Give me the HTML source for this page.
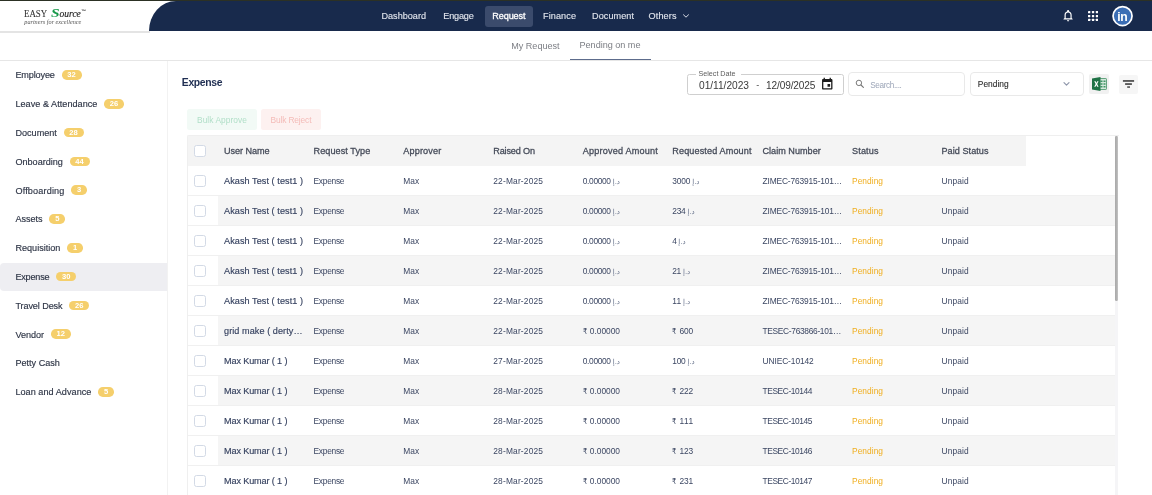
<!DOCTYPE html>
<html lang="en"><head><meta charset="utf-8"><title>Expense - Pending on me</title>
<style>
*{box-sizing:border-box;margin:0;padding:0}
html,body{width:1152px;height:495px;overflow:hidden;background:#fff}
body{position:relative;font-family:"Liberation Sans","DejaVu Sans",sans-serif;color:#2e3a55;-webkit-font-smoothing:antialiased}
#app{position:absolute;left:0;top:0;width:1152px;height:495px;will-change:transform}
.a{position:absolute}
.t{position:absolute;white-space:nowrap;line-height:1}
.dj{font-family:"DejaVu Sans","Liberation Sans",sans-serif}
.nav{color:#e1e5ed;-webkit-text-stroke:.12px #e1e5ed}
.navb{color:#fff;-webkit-text-stroke:.3px #fff}
.tab{color:#7c7e84}
.side{color:#2d3445;-webkit-text-stroke:.15px #2d3445}
.badge{position:absolute;height:9.600px;border-radius:4.800px;background:#f5cf6c;color:#fff;font-size:7.600px;line-height:9.600px;text-align:center;font-weight:bold}
.h1{color:#1f2e52;font-weight:bold}
.th{color:#454b59;-webkit-text-stroke:.28px #454b59}
.un{color:#364260;-webkit-text-stroke:.15px #364260}
.td{color:#3c4763}
.pend{color:#f0ae1e}
.aed{color:#65708a}
.inr{transform-origin:0 50%;transform:scaleX(.82)}
.cb{position:absolute;width:12px;height:12px;border:1px solid #d3dae6;border-radius:2.5px;background:#fff}
.row{position:absolute;left:188px;width:927px;height:30px;border-bottom:1px solid #f0f0f0;background:#fff}
.row.alt::after{content:"";position:absolute;left:30px;top:0;right:0;bottom:0;background:#f5f5f5}
</style></head><body><div id="app">
<div class="a" style="left:0;top:0;width:1152px;height:1px;background:#2c3124"></div>
<div class="a" style="left:0;top:31px;width:150px;height:1.5px;background:#e4e4e4"></div>
<div class="a" style="left:149px;top:1px;width:1003px;height:30px;background:#182a4c;border-top-left-radius:27px 30px"></div>
<div class="a" style="left:485px;top:6px;width:48px;height:21px;background:#3b4b6c;border-radius:3px"></div>
<div class="a" style="left:24.3px;top:3.400px;height:16px;line-height:16px;font-size:11.400px;white-space:nowrap;font-family:'Liberation Serif',serif;color:#333"><span style="display:inline-block;font-size:11.4px;transform-origin:0 50%;transform:scaleX(.78);margin-right:-6.250px;-webkit-text-stroke:.1px #333">EASY</span> <span style="display:inline-block;font-style:italic;font-size:9.8px;color:#222;-webkit-text-stroke:.15px #222;transform-origin:0 50%;transform:scaleX(.97)"><span style="display:inline-block;font-weight:bold;font-size:13.5px;color:#17994a;-webkit-text-stroke:0;transform-origin:0 50%;transform:scaleX(1.18);margin-right:1.300px">S</span>ource</span><span style="display:inline-block;font-family:'Liberation Sans',sans-serif;font-weight:bold;font-size:5px;color:#333;vertical-align:3.300px;margin-left:-.4px">&#x2122;</span></div>
<div class="a" style="left:24.3px;top:18px;font-family:'Liberation Serif',serif;font-style:italic;font-size:6.2px;line-height:7px;color:#555;white-space:nowrap">partners for excellence</div>
<span class="t nav" style="left:381.5px;top:11.60px;font-size:9.1px;">Dashboard</span>
<span class="t nav" style="left:443.3px;top:11.60px;font-size:9.1px;letter-spacing:-0.172px;">Engage</span>
<span class="t navb" style="left:492.3px;top:11.60px;font-size:9.1px;letter-spacing:-0.112px;">Request</span>
<span class="t nav" style="left:543px;top:11.60px;font-size:9.1px;letter-spacing:0.107px;">Finance</span>
<span class="t nav" style="left:592px;top:11.60px;font-size:9.1px;letter-spacing:0.078px;">Document</span>
<span class="t nav" style="left:648.5px;top:11.60px;font-size:9.1px;letter-spacing:0.141px;">Others</span>
<svg class="a" style="left:682px;top:13px" width="8" height="6" viewBox="0 0 8 6"><path d="M1.500 1.800 L4 4.200 L6.500 1.800" fill="none" stroke="#d9dde6" stroke-width="1" stroke-linecap="round" stroke-linejoin="round"/></svg>
<svg class="a" style="left:1061.900px;top:9.400px" width="12.200" height="13.400" viewBox="0 0 24 26"><path d="M12 24.2c1.2 0 2.2-1 2.2-2.2H9.8c0 1.200 1 2.200 2.200 2.200zM19 17.500v-6c0-3.400-1.800-6.200-5-7V3.700c0-.9-.8-1.700-1.700-1.700h-.6C10.800 2 10 2.800 10 3.700v.8c-3.200.8-5 3.600-5 7v6l-2 2v1h18v-1l-2-2zm-2.300.700H7.300v-6.700c0-2.800 1.700-5 4.700-5s4.700 2.200 4.700 5v6.700z" fill="#fff"/></svg>
<svg class="a" style="left:1088px;top:11.200px" width="10.100" height="10.100" viewBox="0 0 10.1 10.1"><rect x="0" y="0" width="2.3" height="2.3" rx=".4" fill="#fff"/><rect x="0" y="3.9" width="2.3" height="2.3" rx=".4" fill="#fff"/><rect x="0" y="7.8" width="2.3" height="2.3" rx=".4" fill="#fff"/><rect x="3.9" y="0" width="2.3" height="2.3" rx=".4" fill="#fff"/><rect x="3.9" y="3.9" width="2.3" height="2.3" rx=".4" fill="#fff"/><rect x="3.9" y="7.8" width="2.3" height="2.3" rx=".4" fill="#fff"/><rect x="7.8" y="0" width="2.3" height="2.3" rx=".4" fill="#fff"/><rect x="7.8" y="3.9" width="2.3" height="2.3" rx=".4" fill="#fff"/><rect x="7.8" y="7.8" width="2.3" height="2.3" rx=".4" fill="#fff"/></svg>
<svg class="a" style="left:1111px;top:5px" width="23" height="23" viewBox="0 0 23 23"><circle cx="11.550" cy="11.050" r="9.500" fill="#3b6eb5" stroke="#fff" stroke-width="1.700"/><text x="11.400" y="15.800" text-anchor="middle" font-family="Liberation Sans, sans-serif" font-weight="bold" font-size="12.200" letter-spacing="-.2" fill="#fff">in</text></svg>
<span class="t tab" style="left:511.3px;top:41.50px;font-size:9.1px;letter-spacing:-0.037px;">My Request</span>
<span class="t tab" style="left:579.5px;top:40.50px;font-size:9.1px;letter-spacing:-0.016px;">Pending on me</span>
<div class="a" style="left:0;top:60px;width:1152px;height:1px;background:#e6e6e6"></div>
<div class="a" style="left:569.5px;top:58.5px;width:81px;height:1.6px;background:#5d6c8c"></div>
<div class="a" style="left:167px;top:61px;width:1px;height:434px;background:#f2f2f2"></div>
<div class="a" style="left:0;top:262.5px;width:167px;height:28.8px;background:#eeeef2;border-radius:4px 0 0 4px"></div>
<span class="t side" style="left:15.4px;top:71.20px;font-size:9.1px;letter-spacing:-0.136px;">Employee</span>
<div class="badge" style="left:61.5px;top:70.2px;width:20px">32</div>
<span class="t side" style="left:15.4px;top:100.00px;font-size:9.1px;letter-spacing:0.035px;">Leave &amp; Attendance</span>
<div class="badge" style="left:104px;top:99px;width:20px">26</div>
<span class="t side" style="left:15.4px;top:128.80px;font-size:9.1px;letter-spacing:0.007px;">Document</span>
<div class="badge" style="left:63.5px;top:127.8px;width:20px">28</div>
<span class="t side" style="left:15.4px;top:157.60px;font-size:9.1px;">Onboarding</span>
<div class="badge" style="left:69.5px;top:156.6px;width:20px">44</div>
<span class="t side" style="left:15.4px;top:187.00px;font-size:9.1px;letter-spacing:0.164px;">Offboarding</span>
<div class="badge" style="left:71px;top:185.4px;width:16px">3</div>
<span class="t side" style="left:15.4px;top:215.20px;font-size:9.1px;letter-spacing:-0.009px;">Assets</span>
<div class="badge" style="left:49.25px;top:214.2px;width:16px">5</div>
<span class="t side" style="left:15.4px;top:244.00px;font-size:9.1px;">Requisition</span>
<div class="badge" style="left:67px;top:243px;width:16px">1</div>
<span class="t side" style="left:15.4px;top:272.80px;font-size:9.1px;letter-spacing:-0.190px;">Expense</span>
<div class="badge" style="left:56.25px;top:271.8px;width:20px">30</div>
<span class="t side" style="left:15.4px;top:301.60px;font-size:9.1px;letter-spacing:-0.094px;">Travel Desk</span>
<div class="badge" style="left:69.25px;top:300.6px;width:20px">26</div>
<span class="t side" style="left:15.4px;top:331.00px;font-size:9.1px;letter-spacing:-0.016px;">Vendor</span>
<div class="badge" style="left:50.75px;top:329.4px;width:20px">12</div>
<span class="t side" style="left:15.4px;top:359.20px;font-size:9.1px;">Petty Cash</span>
<span class="t side" style="left:15.4px;top:388.00px;font-size:9.1px;letter-spacing:0.044px;">Loan and Advance</span>
<div class="badge" style="left:98px;top:387px;width:16px">5</div>
<span class="t h1" style="left:181.8px;top:77.90px;font-size:10.4px;letter-spacing:-0.342px;">Expense</span>
<div class="a" style="left:687px;top:74px;width:156.5px;height:20.5px;border:1px solid #cfcfcf;border-radius:2.5px"></div>
<div class="a" style="left:695.5px;top:72px;width:45.5px;height:4px;background:#fff"></div>
<span class="t lbl" style="left:698.5px;top:70.11px;font-size:7.2px;letter-spacing:-0.016px;color:#5c5c5c">Select Date</span>
<span class="t dt" style="left:699px;top:80.57px;font-size:10.2px;letter-spacing:-0.026px;color:#3a3a3a">01/11/2023</span>
<span class="t dt" style="left:756.3px;top:81.18px;font-size:9px;color:#444">-</span>
<span class="t dt" style="left:766px;top:80.65px;font-size:10.1px;letter-spacing:-0.115px;color:#3a3a3a">12/09/2025</span>
<svg class="a" style="left:821.200px;top:76.700px" width="12.500" height="13.600" viewBox="0 0 24 26"><path d="M20 4h-1V1.500h-2.500V4h-9V1.500H5V4H4c-1.100 0-2 .9-2 2v16c0 1.100.9 2 2 2h16c1.100 0 2-.9 2-2V6c0-1.100-.9-2-2-2zm-.5 17.500h-15V9.500h15v12zM12.500 13.500h5v5h-5z" fill="#1d1d1d"/></svg>
<div class="a" style="left:848.300px;top:72.400px;width:116.700px;height:23.400px;border:1px solid #e9e9e9;border-radius:4px"></div>
<svg class="a" style="left:855.200px;top:78.800px" width="10" height="10" viewBox="0 0 10 10"><circle cx="3.900" cy="3.900" r="2.700" fill="none" stroke="#777" stroke-width="1"/><path d="M6 6 L8.400 8.400" stroke="#777" stroke-width="1.100" stroke-linecap="round"/></svg>
<span class="t ph" style="left:870.3px;top:81.56px;font-size:8.2px;letter-spacing:-0.383px;color:#9da6b8">Search....</span>
<div class="a" style="left:970.300px;top:72.400px;width:113.500px;height:23.400px;border:1px solid #e9e9e9;border-radius:4px"></div>
<span class="t dd" style="left:977.8px;top:80.49px;font-size:8.4px;letter-spacing:0.008px;color:#2e2e2e;-webkit-text-stroke:.12px #2e2e2e">Pending</span>
<svg class="a" style="left:1062.400px;top:81px" width="9" height="6" viewBox="0 0 9 6"><path d="M2 1.600 L4.500 4.100 L7 1.600" fill="none" stroke="#8f97ab" stroke-width="1.200" stroke-linecap="round" stroke-linejoin="round"/></svg>
<div class="a" style="left:1088.8px;top:74px;width:19.8px;height:20px;background:#f1f1f1;border-radius:2px"></div>
<svg class="a" style="left:1091.500px;top:77px" width="15" height="14" viewBox="0 0 30 28"><rect x="14" y="3" width="15" height="22" rx="1.500" fill="#d4e8dc" stroke="#2e8553" stroke-width="1.400"/><path d="M17 7h4v3h-4zM23 7h4v3h-4zM17 12.500h4v3h-4zM23 12.500h4v3h-4zM17 18h4v3h-4zM23 18h4v3h-4z" fill="#3f9464"/><path d="M0 3.200 L17 0 V28 L0 24.800Z" fill="#1f7346"/><path d="M4.500 8.500 H7.300 L8.800 12 L10.400 8.500 H13.100 L10.300 14 L13.200 19.500 H10.400 L8.700 15.800 L7.100 19.500 H4.400 L7.300 14Z" fill="#fff"/></svg>
<div class="a" style="left:1118.5px;top:74.5px;width:19px;height:19.500px;background:#f6f6f6;border-radius:2px"></div>
<svg class="a" style="left:1119px;top:75px" width="19" height="19" viewBox="0 0 19 19"><rect x="3.900" y="5.200" width="11.200" height="1.500" fill="#333"/><rect x="6.100" y="8.300" width="6.800" height="1.500" fill="#333"/><rect x="8.200" y="11.400" width="2.800" height="1.300" fill="#333"/></svg>
<div class="a" style="left:187.400px;top:109.300px;width:69.200px;height:20.800px;background:#f2faf6;border-radius:2.500px"></div>
<span class="t btn" style="left:197px;top:115.89px;font-size:8.4px;letter-spacing:0.058px;color:#b1dfc8">Bulk Approve</span>
<div class="a" style="left:261.300px;top:109.300px;width:59.500px;height:20.800px;background:#fdf1f0;border-radius:2.500px"></div>
<span class="t btn" style="left:270.5px;top:115.89px;font-size:8.4px;letter-spacing:-0.136px;color:#f4bbb8">Bulk Reject</span>
<div class="a" style="left:187px;top:135px;width:932px;height:361px;border:1px solid #efefef;border-right:none;border-bottom:none;border-radius:2px 0 0 0"></div>
<div class="a" style="left:1115px;top:136px;width:3.200px;height:360px;background:#f5f5f7"></div><div class="a" style="left:1115.200px;top:135.700px;width:2.900px;height:165.800px;background:linear-gradient(90deg,#a9a9a9,#b4b4b4 60%,#c6c6c6);border-radius:1.200px"></div>
<div class="a" style="left:188px;top:135.500px;width:837.700px;height:30px;background:#f4f4f4"></div>
<div class="cb" style="left:193.800px;top:144.800px"></div>
<span class="t th" style="left:224px;top:146.60px;font-size:9.1px;letter-spacing:-0.061px;">User Name</span>
<span class="t th" style="left:313.5px;top:146.60px;font-size:9.1px;letter-spacing:0.072px;">Request Type</span>
<span class="t th" style="left:403.25px;top:146.60px;font-size:9.1px;letter-spacing:0.156px;">Approver</span>
<span class="t th" style="left:493.25px;top:146.60px;font-size:9.1px;letter-spacing:-0.152px;">Raised On</span>
<span class="t th" style="left:582.75px;top:146.60px;font-size:9.1px;letter-spacing:0.193px;">Approved Amount</span>
<span class="t th" style="left:672.25px;top:146.60px;font-size:9.1px;letter-spacing:0.126px;">Requested Amount</span>
<span class="t th" style="left:762.5px;top:146.60px;font-size:9.1px;letter-spacing:0.011px;">Claim Number</span>
<span class="t th" style="left:852px;top:146.60px;font-size:9.1px;letter-spacing:0.144px;">Status</span>
<span class="t th" style="left:941.5px;top:146.60px;font-size:9.1px;letter-spacing:0.048px;">Paid Status</span>
<div class="row" style="top:166px"></div>
<div class="cb" style="left:193.800px;top:174.8px"></div>
<span class="t un" style="left:224px;top:177.20px;font-size:9.1px;letter-spacing:0.070px;">Akash Test ( test1 )</span>
<span class="t td" style="left:313.5px;top:176.89px;font-size:8.4px;letter-spacing:-0.266px;">Expense</span>
<span class="t td" style="left:403.25px;top:176.89px;font-size:8.4px;letter-spacing:0.086px;">Max</span>
<span class="t td" style="left:493.25px;top:176.89px;font-size:8.4px;letter-spacing:0.180px;">22-Mar-2025</span>
<span class="t td" style="left:582.75px;top:176.89px;font-size:8.4px;letter-spacing:-0.339px;">0.00000</span>
<span class="t td dj aed" style="left:612.7px;top:178.67px;font-size:7px;letter-spacing:0.202px;">&#x62f;.&#x625;</span>
<span class="t td" style="left:672.25px;top:176.89px;font-size:8.4px;letter-spacing:-0.130px;">3000</span>
<span class="t td dj aed" style="left:692.2px;top:178.67px;font-size:7px;letter-spacing:0.202px;">&#x62f;.&#x625;</span>
<span class="t td" style="left:762.5px;top:176.89px;font-size:8.4px;letter-spacing:-0.137px;">ZIMEC-763915-101&#x2026;</span>
<span class="t td pend" style="left:852px;top:176.89px;font-size:8.4px;letter-spacing:0.042px;">Pending</span>
<span class="t td" style="left:941.5px;top:176.89px;font-size:8.4px;letter-spacing:0.141px;">Unpaid</span>
<div class="row alt" style="top:196px"></div>
<div class="cb" style="left:193.800px;top:204.8px"></div>
<span class="t un" style="left:224px;top:207.20px;font-size:9.1px;letter-spacing:0.070px;">Akash Test ( test1 )</span>
<span class="t td" style="left:313.5px;top:206.89px;font-size:8.4px;letter-spacing:-0.266px;">Expense</span>
<span class="t td" style="left:403.25px;top:206.89px;font-size:8.4px;letter-spacing:0.086px;">Max</span>
<span class="t td" style="left:493.25px;top:206.89px;font-size:8.4px;letter-spacing:0.180px;">22-Mar-2025</span>
<span class="t td" style="left:582.75px;top:206.89px;font-size:8.4px;letter-spacing:-0.339px;">0.00000</span>
<span class="t td dj aed" style="left:612.7px;top:208.67px;font-size:7px;letter-spacing:0.202px;">&#x62f;.&#x625;</span>
<span class="t td" style="left:672.25px;top:206.89px;font-size:8.4px;letter-spacing:-0.242px;">234</span>
<span class="t td dj aed" style="left:687.45px;top:208.67px;font-size:7px;letter-spacing:0.202px;">&#x62f;.&#x625;</span>
<span class="t td" style="left:762.5px;top:206.89px;font-size:8.4px;letter-spacing:-0.137px;">ZIMEC-763915-101&#x2026;</span>
<span class="t td pend" style="left:852px;top:206.89px;font-size:8.4px;letter-spacing:0.042px;">Pending</span>
<span class="t td" style="left:941.5px;top:206.89px;font-size:8.4px;letter-spacing:0.141px;">Unpaid</span>
<div class="row" style="top:226px"></div>
<div class="cb" style="left:193.800px;top:234.8px"></div>
<span class="t un" style="left:224px;top:237.20px;font-size:9.1px;letter-spacing:0.070px;">Akash Test ( test1 )</span>
<span class="t td" style="left:313.5px;top:236.89px;font-size:8.4px;letter-spacing:-0.266px;">Expense</span>
<span class="t td" style="left:403.25px;top:236.89px;font-size:8.4px;letter-spacing:0.086px;">Max</span>
<span class="t td" style="left:493.25px;top:236.89px;font-size:8.4px;letter-spacing:0.180px;">22-Mar-2025</span>
<span class="t td" style="left:582.75px;top:236.89px;font-size:8.4px;letter-spacing:-0.339px;">0.00000</span>
<span class="t td dj aed" style="left:612.7px;top:238.67px;font-size:7px;letter-spacing:0.202px;">&#x62f;.&#x625;</span>
<span class="t td" style="left:672.25px;top:236.89px;font-size:8.4px;letter-spacing:-0.372px;">4</span>
<span class="t td dj aed" style="left:678.25px;top:238.67px;font-size:7px;letter-spacing:0.202px;">&#x62f;.&#x625;</span>
<span class="t td" style="left:762.5px;top:236.89px;font-size:8.4px;letter-spacing:-0.137px;">ZIMEC-763915-101&#x2026;</span>
<span class="t td pend" style="left:852px;top:236.89px;font-size:8.4px;letter-spacing:0.042px;">Pending</span>
<span class="t td" style="left:941.5px;top:236.89px;font-size:8.4px;letter-spacing:0.141px;">Unpaid</span>
<div class="row alt" style="top:256px"></div>
<div class="cb" style="left:193.800px;top:264.8px"></div>
<span class="t un" style="left:224px;top:267.20px;font-size:9.1px;letter-spacing:0.070px;">Akash Test ( test1 )</span>
<span class="t td" style="left:313.5px;top:266.89px;font-size:8.4px;letter-spacing:-0.266px;">Expense</span>
<span class="t td" style="left:403.25px;top:266.89px;font-size:8.4px;letter-spacing:0.086px;">Max</span>
<span class="t td" style="left:493.25px;top:266.89px;font-size:8.4px;letter-spacing:0.180px;">22-Mar-2025</span>
<span class="t td" style="left:582.75px;top:266.89px;font-size:8.4px;letter-spacing:-0.339px;">0.00000</span>
<span class="t td dj aed" style="left:612.7px;top:268.67px;font-size:7px;letter-spacing:0.202px;">&#x62f;.&#x625;</span>
<span class="t td" style="left:672.25px;top:266.89px;font-size:8.4px;letter-spacing:-0.328px;">21</span>
<span class="t td dj aed" style="left:682.95px;top:268.67px;font-size:7px;letter-spacing:0.202px;">&#x62f;.&#x625;</span>
<span class="t td" style="left:762.5px;top:266.89px;font-size:8.4px;letter-spacing:-0.137px;">ZIMEC-763915-101&#x2026;</span>
<span class="t td pend" style="left:852px;top:266.89px;font-size:8.4px;letter-spacing:0.042px;">Pending</span>
<span class="t td" style="left:941.5px;top:266.89px;font-size:8.4px;letter-spacing:0.141px;">Unpaid</span>
<div class="row" style="top:286px"></div>
<div class="cb" style="left:193.800px;top:294.8px"></div>
<span class="t un" style="left:224px;top:297.20px;font-size:9.1px;letter-spacing:0.070px;">Akash Test ( test1 )</span>
<span class="t td" style="left:313.5px;top:296.89px;font-size:8.4px;letter-spacing:-0.266px;">Expense</span>
<span class="t td" style="left:403.25px;top:296.89px;font-size:8.4px;letter-spacing:0.086px;">Max</span>
<span class="t td" style="left:493.25px;top:296.89px;font-size:8.4px;letter-spacing:0.180px;">22-Mar-2025</span>
<span class="t td" style="left:582.75px;top:296.89px;font-size:8.4px;letter-spacing:-0.339px;">0.00000</span>
<span class="t td dj aed" style="left:612.7px;top:298.67px;font-size:7px;letter-spacing:0.202px;">&#x62f;.&#x625;</span>
<span class="t td" style="left:672.25px;top:296.89px;font-size:8.4px;letter-spacing:0.297px;">11</span>
<span class="t td dj aed" style="left:682.95px;top:298.67px;font-size:7px;letter-spacing:0.202px;">&#x62f;.&#x625;</span>
<span class="t td" style="left:762.5px;top:296.89px;font-size:8.4px;letter-spacing:-0.137px;">ZIMEC-763915-101&#x2026;</span>
<span class="t td pend" style="left:852px;top:296.89px;font-size:8.4px;letter-spacing:0.042px;">Pending</span>
<span class="t td" style="left:941.5px;top:296.89px;font-size:8.4px;letter-spacing:0.141px;">Unpaid</span>
<div class="row alt" style="top:316px"></div>
<div class="cb" style="left:193.800px;top:324.8px"></div>
<span class="t un" style="left:224px;top:327.20px;font-size:9.1px;letter-spacing:0.069px;">grid make ( derty&#x2026;</span>
<span class="t td" style="left:313.5px;top:326.89px;font-size:8.4px;letter-spacing:-0.266px;">Expense</span>
<span class="t td" style="left:403.25px;top:326.89px;font-size:8.4px;letter-spacing:0.086px;">Max</span>
<span class="t td" style="left:493.25px;top:326.89px;font-size:8.4px;letter-spacing:0.180px;">22-Mar-2025</span>
<span class="t td dj inr" style="left:582.75px;top:327.36px;font-size:8.2px;">&#x20b9;</span>
<span class="t td" style="left:589.75px;top:326.89px;font-size:8.4px;letter-spacing:-0.005px;">0.00000</span>
<span class="t td dj inr" style="left:672.25px;top:327.36px;font-size:8.2px;">&#x20b9;</span>
<span class="t td" style="left:679.45px;top:326.89px;font-size:8.4px;letter-spacing:-0.117px;">600</span>
<span class="t td" style="left:762.5px;top:326.89px;font-size:8.4px;letter-spacing:-0.315px;">TESEC-763866-101&#x2026;</span>
<span class="t td pend" style="left:852px;top:326.89px;font-size:8.4px;letter-spacing:0.042px;">Pending</span>
<span class="t td" style="left:941.5px;top:326.89px;font-size:8.4px;letter-spacing:0.141px;">Unpaid</span>
<div class="row" style="top:346px"></div>
<div class="cb" style="left:193.800px;top:354.8px"></div>
<span class="t un" style="left:224px;top:357.20px;font-size:9.1px;letter-spacing:-0.121px;">Max Kumar ( 1 )</span>
<span class="t td" style="left:313.5px;top:356.89px;font-size:8.4px;letter-spacing:-0.266px;">Expense</span>
<span class="t td" style="left:403.25px;top:356.89px;font-size:8.4px;letter-spacing:0.086px;">Max</span>
<span class="t td" style="left:493.25px;top:356.89px;font-size:8.4px;letter-spacing:0.180px;">27-Mar-2025</span>
<span class="t td" style="left:582.75px;top:356.89px;font-size:8.4px;letter-spacing:-0.339px;">0.00000</span>
<span class="t td dj aed" style="left:612.7px;top:358.67px;font-size:7px;letter-spacing:0.202px;">&#x62f;.&#x625;</span>
<span class="t td" style="left:672.25px;top:356.89px;font-size:8.4px;letter-spacing:-0.242px;">100</span>
<span class="t td dj aed" style="left:687.45px;top:358.67px;font-size:7px;letter-spacing:0.202px;">&#x62f;.&#x625;</span>
<span class="t td" style="left:762.5px;top:356.89px;font-size:8.4px;letter-spacing:-0.089px;">UNIEC-10142</span>
<span class="t td pend" style="left:852px;top:356.89px;font-size:8.4px;letter-spacing:0.042px;">Pending</span>
<span class="t td" style="left:941.5px;top:356.89px;font-size:8.4px;letter-spacing:0.141px;">Unpaid</span>
<div class="row alt" style="top:376px"></div>
<div class="cb" style="left:193.800px;top:384.8px"></div>
<span class="t un" style="left:224px;top:387.20px;font-size:9.1px;letter-spacing:-0.121px;">Max Kumar ( 1 )</span>
<span class="t td" style="left:313.5px;top:386.89px;font-size:8.4px;letter-spacing:-0.266px;">Expense</span>
<span class="t td" style="left:403.25px;top:386.89px;font-size:8.4px;letter-spacing:0.086px;">Max</span>
<span class="t td" style="left:493.25px;top:386.89px;font-size:8.4px;letter-spacing:0.180px;">28-Mar-2025</span>
<span class="t td dj inr" style="left:582.75px;top:387.36px;font-size:8.2px;">&#x20b9;</span>
<span class="t td" style="left:589.75px;top:386.89px;font-size:8.4px;letter-spacing:-0.005px;">0.00000</span>
<span class="t td dj inr" style="left:672.25px;top:387.36px;font-size:8.2px;">&#x20b9;</span>
<span class="t td" style="left:679.45px;top:386.89px;font-size:8.4px;letter-spacing:-0.117px;">222</span>
<span class="t td" style="left:762.5px;top:386.89px;font-size:8.4px;letter-spacing:-0.400px;">TESEC-10144</span>
<span class="t td pend" style="left:852px;top:386.89px;font-size:8.4px;letter-spacing:0.042px;">Pending</span>
<span class="t td" style="left:941.5px;top:386.89px;font-size:8.4px;letter-spacing:0.141px;">Unpaid</span>
<div class="row" style="top:406px"></div>
<div class="cb" style="left:193.800px;top:414.8px"></div>
<span class="t un" style="left:224px;top:417.20px;font-size:9.1px;letter-spacing:-0.121px;">Max Kumar ( 1 )</span>
<span class="t td" style="left:313.5px;top:416.89px;font-size:8.4px;letter-spacing:-0.266px;">Expense</span>
<span class="t td" style="left:403.25px;top:416.89px;font-size:8.4px;letter-spacing:0.086px;">Max</span>
<span class="t td" style="left:493.25px;top:416.89px;font-size:8.4px;letter-spacing:0.180px;">28-Mar-2025</span>
<span class="t td dj inr" style="left:582.75px;top:417.36px;font-size:8.2px;">&#x20b9;</span>
<span class="t td" style="left:589.75px;top:416.89px;font-size:8.4px;letter-spacing:-0.005px;">0.00000</span>
<span class="t td dj inr" style="left:672.25px;top:417.36px;font-size:8.2px;">&#x20b9;</span>
<span class="t td" style="left:679.45px;top:416.89px;font-size:8.4px;letter-spacing:0.508px;">111</span>
<span class="t td" style="left:762.5px;top:416.89px;font-size:8.4px;letter-spacing:-0.400px;">TESEC-10145</span>
<span class="t td pend" style="left:852px;top:416.89px;font-size:8.4px;letter-spacing:0.042px;">Pending</span>
<span class="t td" style="left:941.5px;top:416.89px;font-size:8.4px;letter-spacing:0.141px;">Unpaid</span>
<div class="row alt" style="top:436px"></div>
<div class="cb" style="left:193.800px;top:444.8px"></div>
<span class="t un" style="left:224px;top:447.20px;font-size:9.1px;letter-spacing:-0.121px;">Max Kumar ( 1 )</span>
<span class="t td" style="left:313.5px;top:446.89px;font-size:8.4px;letter-spacing:-0.266px;">Expense</span>
<span class="t td" style="left:403.25px;top:446.89px;font-size:8.4px;letter-spacing:0.086px;">Max</span>
<span class="t td" style="left:493.25px;top:446.89px;font-size:8.4px;letter-spacing:0.180px;">28-Mar-2025</span>
<span class="t td dj inr" style="left:582.75px;top:447.36px;font-size:8.2px;">&#x20b9;</span>
<span class="t td" style="left:589.75px;top:446.89px;font-size:8.4px;letter-spacing:-0.005px;">0.00000</span>
<span class="t td dj inr" style="left:672.25px;top:447.36px;font-size:8.2px;">&#x20b9;</span>
<span class="t td" style="left:679.45px;top:446.89px;font-size:8.4px;letter-spacing:-0.117px;">123</span>
<span class="t td" style="left:762.5px;top:446.89px;font-size:8.4px;letter-spacing:-0.400px;">TESEC-10146</span>
<span class="t td pend" style="left:852px;top:446.89px;font-size:8.4px;letter-spacing:0.042px;">Pending</span>
<span class="t td" style="left:941.5px;top:446.89px;font-size:8.4px;letter-spacing:0.141px;">Unpaid</span>
<div class="row" style="top:466px"></div>
<div class="cb" style="left:193.800px;top:474.8px"></div>
<span class="t un" style="left:224px;top:477.20px;font-size:9.1px;letter-spacing:-0.121px;">Max Kumar ( 1 )</span>
<span class="t td" style="left:313.5px;top:476.89px;font-size:8.4px;letter-spacing:-0.266px;">Expense</span>
<span class="t td" style="left:403.25px;top:476.89px;font-size:8.4px;letter-spacing:0.086px;">Max</span>
<span class="t td" style="left:493.25px;top:476.89px;font-size:8.4px;letter-spacing:0.180px;">28-Mar-2025</span>
<span class="t td dj inr" style="left:582.75px;top:477.36px;font-size:8.2px;">&#x20b9;</span>
<span class="t td" style="left:589.75px;top:476.89px;font-size:8.4px;letter-spacing:-0.005px;">0.00000</span>
<span class="t td dj inr" style="left:672.25px;top:477.36px;font-size:8.2px;">&#x20b9;</span>
<span class="t td" style="left:679.45px;top:476.89px;font-size:8.4px;letter-spacing:-0.117px;">231</span>
<span class="t td" style="left:762.5px;top:476.89px;font-size:8.4px;letter-spacing:-0.400px;">TESEC-10147</span>
<span class="t td pend" style="left:852px;top:476.89px;font-size:8.4px;letter-spacing:0.042px;">Pending</span>
<span class="t td" style="left:941.5px;top:476.89px;font-size:8.4px;letter-spacing:0.141px;">Unpaid</span>
</div></body></html>
